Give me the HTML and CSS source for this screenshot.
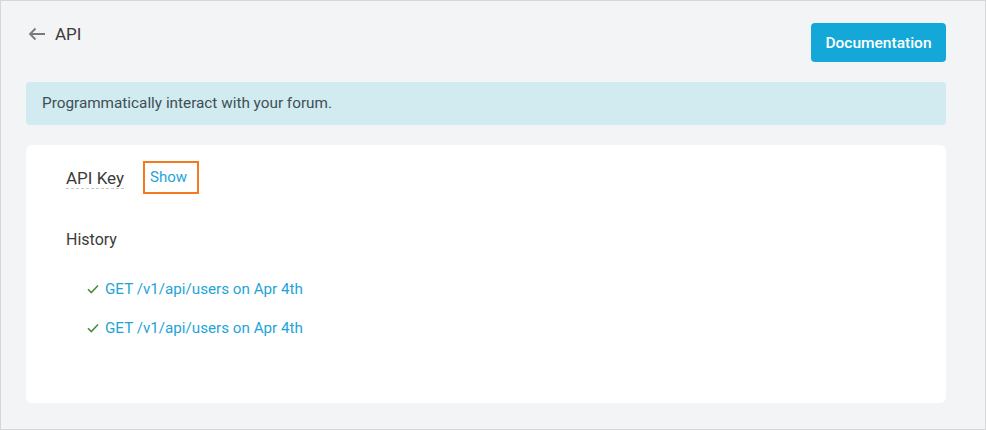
FILE: index.html
```html
<!DOCTYPE html>
<html>
<head>
<meta charset="utf-8">
<link rel="stylesheet" href="styles.css">
</head>
<body>
<div class="frame">
  <div class="header">
    <div class="title">
      <svg class="back" width="18" height="14" viewBox="0 0 18 14"><path d="M17 7H2M7.5 1.5L2 7l5.5 5.5" fill="none" stroke="#7a7a7a" stroke-width="1.8"/></svg>
      <span>API</span>
    </div>
    <button class="doc-btn">Documentation</button>
  </div>
  <div class="alert">Programmatically interact with your forum.</div>
  <div class="card">
    <div class="key-row">
      <span class="key-label">API Key</span>
      <span class="show">Show</span>
    </div>
    <div class="history-title">History</div>
    <ul class="history">
      <li><svg class="check" width="12" height="10" viewBox="0 0 12 10"><path d="M1 5.2l3.3 3.3L11 1.5" fill="none" stroke="#4e8a3e" stroke-width="1.6"/></svg><span>GET /v1/api/users on Apr 4th</span></li>
      <li><svg class="check" width="12" height="10" viewBox="0 0 12 10"><path d="M1 5.2l3.3 3.3L11 1.5" fill="none" stroke="#4e8a3e" stroke-width="1.6"/></svg><span>GET /v1/api/users on Apr 4th</span></li>
    </ul>
  </div>
</div>
</body>
</html>
```
FILE: styles.css
```css
html, body { margin: 0; padding: 0; }
body { font-family: Roboto, "Liberation Sans", sans-serif; }
.frame {
  width: 986px; height: 430px; box-sizing: border-box;
  border: 1px solid #d5d7da; background: #f3f4f6;
  padding: 22px 39px 0 25px;
}
.header { display: flex; justify-content: space-between; align-items: flex-start; height: 39px; }
.title { display: flex; align-items: center; gap: 9px; padding-left: 2px; margin-top: 1px; font-size: 17px; color: #3b3b3b; line-height: 20px; }
.back { display: block; }
.doc-btn {
  width: 135px; height: 39px; border: none; border-radius: 4px;
  background: #14a8d9; color: #fff; font-family: inherit; font-size: 15.5px; font-weight: 500;
  padding: 0;
}
.alert {
  margin-top: 20px; height: 43px; box-sizing: border-box;
  background: #d1ebf0; border-radius: 4px; padding: 11px 16px;
  font-size: 15.3px; line-height: 20px; color: #3e4f55;
}
.card {
  margin-top: 20px; height: 258px; box-sizing: border-box; background: #fff; border-radius: 6px;
  padding: 16px 40px 0 40px;
}
.key-row { display: flex; align-items: center; height: 33px; }
.key-label {
  font-size: 17px; color: #3b3b3b; line-height: 20px;
  border-bottom: 1px dashed #c8c8c8; padding-bottom: 0; margin-top: 2px;
}
.show {
  margin-left: 19px; box-sizing: border-box; height: 33px; width: 56px;
  border: 2px solid #f47a20; color: #1ea4d8; font-size: 15px; line-height: 29px; padding-left: 5px;
}
.history-title { margin-top: 36px; font-size: 16px; line-height: 20px; color: #3b3b3b; }
.history { list-style: none; margin: 29px 0 0; padding: 0 0 0 21px; }
.history li { display: flex; align-items: center; height: 20px; margin-bottom: 19px; font-size: 15.2px; color: #1ea4d8; }
.check { margin-right: 6px; }
```
